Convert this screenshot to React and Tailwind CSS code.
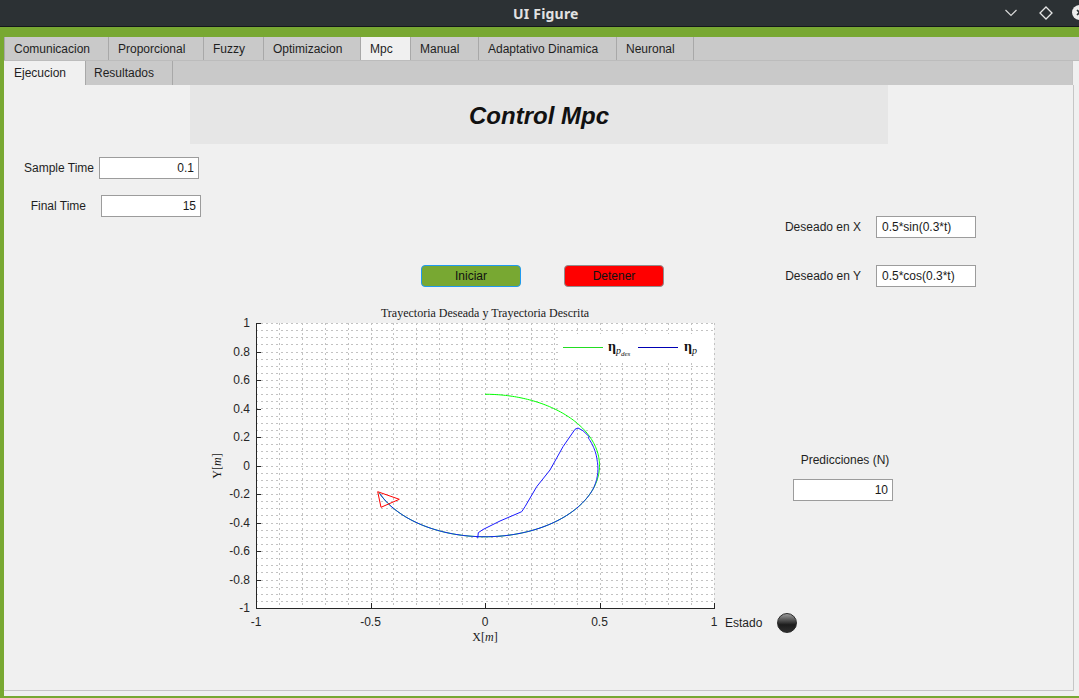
import React from "react";

const X = (x) => 51 + (x + 1) * 229;
const Y = (y) => 165.5 - y * 142.5;

function Plot() {
  const vlines = [];
  for (let i = 1; i <= 20; i++) vlines.push(Math.round(X(-1 + i * 0.1)) + 0.5);
  const hlines = [];
  for (let i = 1; i <= 40; i++) hlines.push(Math.round(Y(-1 + i * 0.05)) + 0.5);

  const green = [];
  for (let t = 0; t <= 4.32; t += 0.02) {
    green.push(`${X(0.5 * Math.sin(t)).toFixed(2)},${Y(0.5 * Math.cos(t)).toFixed(2)}`);
  }
  const startPts = [
    [477.7, 538.3],
    [478.3, 532.7],
    [483, 529.5],
    [500, 521],
    [521.7, 511.7],
    [525, 506.7],
    [536.7, 486.7],
    [550, 470],
    [563, 446.7],
    [575, 429.3],
    [578, 428],
    [583, 430.7],
    [589, 436.5],
  ].map(([a, b]) => `${(a - 205).toFixed(2)},${(b - 300).toFixed(2)}`);
  const blue = [...startPts];
  for (let t = 1.17; t <= 4.32; t += 0.02) {
    const r = t < 1.9 ? 0.491 + 0.009 * Math.max(0, (t - 1.5) / 0.4) : 0.5;
    blue.push(`${X(r * Math.sin(t)).toFixed(2)},${Y(r * Math.cos(t)).toFixed(2)}`);
  }
  const tri = [
    [377.7, 491.7],
    [399.3, 499.3],
    [381, 507.3],
  ]
    .map(([a, b]) => `${a - 205},${b - 300}`)
    .join(" ");

  const yTicks = [1, 0.8, 0.6, 0.4, 0.2, 0, -0.2, -0.4, -0.6, -0.8, -1];
  const xTicks = [-1, -0.5, 0, 0.5, 1];
  const fmt = (v) => (Math.abs(v) < 1e-9 ? "0" : String(Math.round(v * 10) / 10));

  return (
    <svg width="515" height="350" viewBox="0 0 515 350" className="block">
      <rect x="51" y="23" width="458" height="285" fill="#ffffff" />
      <g stroke="#c2c2c2" strokeWidth="1" strokeDasharray="2 3">
        {vlines.map((x, i) => (
          <line key={"v" + i} x1={x} y1="23" x2={x} y2="308" />
        ))}
        {hlines.map((y, i) => (
          <line key={"h" + i} x1="51" y1={y} x2="510" y2={y} />
        ))}
      </g>
      <polyline points={green.join(" ")} fill="none" stroke="#00ff00" strokeWidth="1" />
      <polyline points={blue.join(" ")} fill="none" stroke="#1a1aff" strokeWidth="1" />
      <polygon points={tri} fill="none" stroke="#ff0000" strokeWidth="1" />
      <g stroke="#262626" strokeWidth="1">
        <line x1="51.5" y1="23" x2="51.5" y2="309" />
        <line x1="51" y1="308.5" x2="510" y2="308.5" />
        {yTicks.map((v, i) => {
          const y = Math.round(Y(v)) + 0.5;
          return <line key={"yt" + i} x1="51" y1={y} x2="56" y2={y} />;
        })}
        {xTicks.map((v, i) => {
          const x = Math.round(X(v)) + 0.5;
          return <line key={"xt" + i} x1={x} y1="308" x2={x} y2="303" />;
        })}
      </g>
      <g fill="#262626" fontFamily="'Liberation Sans', Arial, sans-serif" fontSize="12">
        {yTicks.map((v, i) => (
          <text key={"yl" + i} x="45" y={Y(v)} textAnchor="end" dominantBaseline="central">
            {fmt(v)}
          </text>
        ))}
        {xTicks.map((v, i) => (
          <text key={"xl" + i} x={X(v)} y="321.5" textAnchor="middle" dominantBaseline="central">
            {fmt(v)}
          </text>
        ))}
      </g>
      <g fill="#1a1a1a" fontFamily="'Liberation Serif', 'Times New Roman', serif" fontSize="12">
        <text x="280" y="17" textAnchor="middle">
          Trayectoria Deseada y Trayectoria Descrita
        </text>
        <text x="280" y="341" textAnchor="middle">
          X[<tspan fontStyle="italic">m</tspan>]
        </text>
        <text x="12" y="166" textAnchor="middle" transform="rotate(-90 12 166)" dominantBaseline="central">
          Y[<tspan fontStyle="italic">m</tspan>]
        </text>
      </g>
      <rect x="353" y="34" width="155" height="26" fill="#ffffff" />
      <line x1="358" y1="47.5" x2="398" y2="47.5" stroke="#22dd22" strokeWidth="1" />
      <line x1="433" y1="47.5" x2="473" y2="47.5" stroke="#0000b4" strokeWidth="1" />
      <g fill="#111" fontFamily="'Liberation Serif', 'DejaVu Serif', serif">
        <text x="403" y="50.5" fontSize="14" fontWeight="bold">
          η
          <tspan fontSize="10" fontStyle="italic" fontWeight="normal" dy="3">p</tspan>
          <tspan fontSize="7" fontStyle="italic" fontWeight="normal" dy="2">des</tspan>
        </text>
        <text x="479" y="50.5" fontSize="14" fontWeight="bold">
          η
          <tspan fontSize="10" fontStyle="italic" fontWeight="normal" dy="3">p</tspan>
        </text>
      </g>
    </svg>
  );
}

function Input({ value, align = "right", w = "w-[100px]" }) {
  return (
    <div
      className={`${w} h-[22px] shrink-0 bg-white border border-[#9c9c9c] flex items-center text-[12px] text-[#1a1a1a] ${
        align === "right" ? "justify-end pr-[4px]" : "justify-start pl-[5px]"
      }`}
    >
      {value}
    </div>
  );
}

const tabs1 = [
  ["Comunicacion", "w-[105px] border-l"],
  ["Proporcional", "w-[95px]"],
  ["Fuzzy", "w-[60px]"],
  ["Optimizacion", "w-[97px]"],
  ["Mpc", "w-[50px]", true],
  ["Manual", "w-[68px]"],
  ["Adaptativo Dinamica", "w-[138px]"],
  ["Neuronal", "w-[77px]"],
];

export default function App() {
  return (
    <div className="w-[1079px] h-[698px] overflow-hidden flex flex-col bg-[#78a832] font-['Liberation_Sans',Arial,sans-serif] text-[12px] text-[#1f1f1f]">
      {/* Title bar */}
      <div className="h-[27px] shrink-0 bg-[#2c3134] border-b border-[#15181a] flex items-center relative">
        <span className="ml-[513px] text-[14px] font-bold text-[#e2e2e2] font-['Noto_Sans','Liberation_Sans',sans-serif] tracking-[0.2px]">
          UI Figure
        </span>
        <div className="ml-auto flex items-center">
          <svg width="12" height="8" viewBox="0 0 12 8" className="mr-[22px]">
            <path d="M0.5 1 L6 6.5 L11.5 1" fill="none" stroke="#d8d8d8" strokeWidth="1.2" />
          </svg>
          <svg width="14" height="14" viewBox="0 0 14 14" className="mr-[19px] -mt-[1px]">
            <path d="M7 1 L13 7 L7 13 L1 7 Z" fill="none" stroke="#e6e6e6" strokeWidth="1.3" />
          </svg>
          <svg width="15" height="15" viewBox="0 0 15 15" className="-mr-[8px] -mt-[2px] shrink-0">
            <circle cx="7.5" cy="7.5" r="7.5" fill="#ececec" />
            <path d="M5 5 L10 10 M10 5 L5 10" stroke="#2c3134" strokeWidth="1.6" />
          </svg>
        </div>
      </div>
      {/* green band */}
      <div className="h-[10px] shrink-0" />
      <div className="flex-1 flex min-h-0 pb-[2px]">
        <div className="w-[4px] shrink-0" />
        <div className="flex-1 flex flex-col bg-[#f0f0f0] min-h-0">
          {/* Tab row 1 */}
          <div className="h-[24px] shrink-0 bg-[#c9c9c9] flex border-b border-[#bcbcbc]">
            {tabs1.map(([label, cls, sel]) => (
              <div
                key={label}
                className={`${cls} h-full border-r border-[#a8a8a8] flex items-center pl-[9px] whitespace-nowrap ${
                  sel ? "bg-[#f0f0f0]" : ""
                }`}
              >
                {label}
              </div>
            ))}
          </div>
          {/* Tab row 2 */}
          <div className="h-[24px] shrink-0 w-[1069px] bg-[#c9c9c9] flex border-r border-[#c4c4c4]">
            <div className="w-[82px] h-full bg-[#f0f0f0] border-r border-[#a8a8a8] flex items-center pl-[10px]">
              Ejecucion
            </div>
            <div className="w-[87px] h-full border-r border-[#a8a8a8] flex items-center pl-[8px]">
              Resultados
            </div>
          </div>
          {/* Content panel */}
          <div className="w-[1070px] h-[606px] shrink-0 border-r border-b border-[#c6c6c6] flex flex-col">
            <div className="ml-[186px] w-[698px] h-[59px] shrink-0 bg-[#e6e6e6] flex items-center justify-center pt-[3px]">
              <span className="text-[24px] font-bold italic text-[#111]">Control Mpc</span>
            </div>
            <div className="flex flex-1">
              {/* Column A */}
              <div className="w-[201px] shrink-0 flex flex-col">
                <div className="mt-[13px] h-[22px] flex items-center">
                  <div className="w-[95px] text-right pr-[5px]">Sample Time</div>
                  <Input value="0.1" />
                </div>
                <div className="mt-[16px] h-[22px] flex items-center">
                  <div className="w-[97px] text-right pr-[15px]">Final Time</div>
                  <Input value="15" />
                </div>
              </div>
              {/* Column B */}
              <div className="w-[515px] shrink-0 flex flex-col">
                <div className="mt-[121px] h-[22px] flex">
                  <button className="ml-[216px] w-[100px] h-[22px] rounded-[4px] bg-[#78a832] border border-[#1f9af0] text-[12px] text-[#111] flex items-center justify-center">
                    Iniciar
                  </button>
                  <button className="ml-[43px] w-[100px] h-[22px] rounded-[4px] bg-[#ff0000] border border-[#8f8f8f] text-[12px] text-[#111] flex items-center justify-center">
                    Detener
                  </button>
                </div>
                <div className="mt-[13px]">
                  <Plot />
                </div>
              </div>
              {/* Column C */}
              <div className="flex-1 flex flex-col">
                <div className="mt-[72px] h-[22px] flex items-center">
                  <div className="w-[156px] text-right pr-[15px]">Deseado en X</div>
                  <Input value="0.5*sin(0.3*t)" align="left" />
                </div>
                <div className="mt-[27px] h-[22px] flex items-center">
                  <div className="w-[156px] text-right pr-[15px]">Deseado en Y</div>
                  <Input value="0.5*cos(0.3*t)" align="left" />
                </div>
                <div className="mt-[165px] ml-[75px] w-[100px] h-[16px] leading-[16px] text-center">
                  Predicciones (N)
                </div>
                <div className="mt-[11px] ml-[73px]">
                  <Input value="10" />
                </div>
                <div className="mt-[112px] h-[20px] flex items-center">
                  <div className="ml-[5px] w-[52px]">Estado</div>
                  <div className="w-[20px] h-[20px] rounded-full border border-[#2a2a2a] bg-[linear-gradient(to_bottom,#9a9a9a_0%,#5c5c5c_30%,#1c1c1c_60%,#2e2e2e_100%)]" />
                </div>
              </div>
            </div>
          </div>
          <div className="flex-1" />
        </div>
      </div>
    </div>
  );
}
